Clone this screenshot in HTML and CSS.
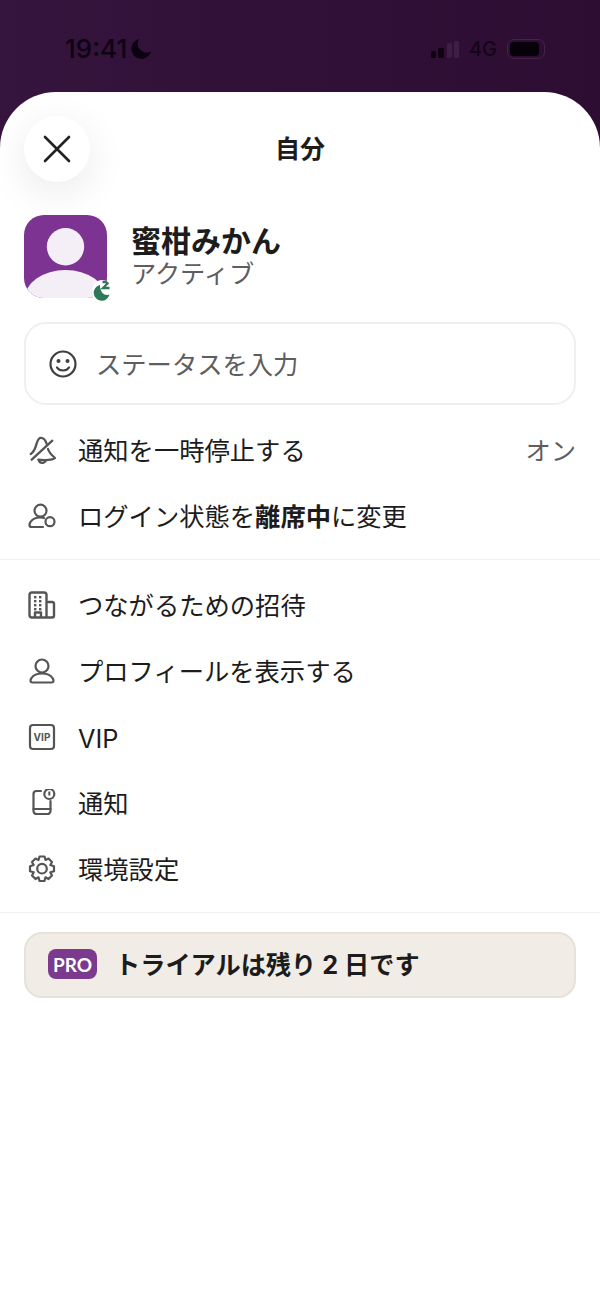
FILE: index.html
```html
<!DOCTYPE html>
<html lang="ja">
	<head>
		<meta charset="utf-8" />
		<title>自分</title>
		<link rel="stylesheet" href="styles.css">
	</head>
	<body>
		<div class="statusbar">
			<div class="clock">
				<span>19:41</span>
				<svg class="moon" width="21" height="21" viewBox="0 0 21 21"><path d="M8 1a10 10 0 1 0 12 12.500A9 9 0 0 1 8 1z" /></svg>
			</div>
			<div class="signal">
				<svg width="28" height="20" viewBox="0 0 28 20">
					<rect x="0" y="12" width="5" height="7" rx="1.500" fill="#0e0412" />
					<rect x="7" y="9" width="6" height="10" rx="1.500" fill="#0e0412" />
					<rect x="16" y="4" width="5" height="15" rx="1.500" fill="#3f1e46" />
					<rect x="23" y="2" width="5" height="17" rx="1.500" fill="#3f1e46" />
				</svg>
				<span class="net">4G</span>
				<div class="battery"><div class="battery-fill"></div></div>
			</div>
		</div>
		<div class="sheet">
			<div class="nav">
				<button class="close">
					<svg width="28" height="28" viewBox="0 0 28 28"><path d="M2 2l24 24M26 2L2 26" fill="none" stroke="#222" stroke-width="2.600" stroke-linecap="round" /></svg>
				</button>
				<div class="title">自分</div>
			</div>
			<div class="profile">
				<div class="avatar">
					<svg width="83" height="83" viewBox="0 0 83 83">
						<circle cx="41.500" cy="31.700" r="18.700" fill="#f4eff7" />
						<ellipse cx="41.500" cy="84" rx="41" ry="29" fill="#f4eff7" />
					</svg>
					<svg class="away" width="20" height="22" viewBox="0 0 20 22">
						<path d="M8 4.900a8 8 0 1 0 9.500 9.600c-4 1.500-9.500-1-9.500-9.600z" fill="#2d7a5b" />
						<path d="M10.500 2h6.500l-6 6h6.500" fill="none" stroke="#2d7a5b" stroke-width="2.300" />
					</svg>
				</div>
				<div class="who">
					<div class="name">蜜柑みかん</div>
					<div class="state">アクティブ</div>
				</div>
			</div>
			<div class="status-input">
				<svg class="icon" width="30" height="30" viewBox="0 0 30 30">
					<circle cx="15" cy="15" r="12.500" fill="none" stroke="#3f3f3f" stroke-width="2.200" />
					<circle cx="10.500" cy="12" r="2" fill="#3f3f3f" />
					<circle cx="19.500" cy="12" r="2" fill="#3f3f3f" />
					<path d="M9 18.500c2.500 4 9.500 4 12 0" fill="none" stroke="#3f3f3f" stroke-width="2.200" stroke-linecap="round" />
				</svg>
				<span class="label">ステータスを入力</span>
			</div>
			<div class="group">
				<div class="row">
					<svg class="icon" width="28" height="28" viewBox="0 0 28 28"><g fill="none" stroke="#555" stroke-width="2.300" stroke-linecap="round" stroke-linejoin="round">
						<path d="M3.700 23.700L24.300 4.700" />
						<path d="M2.700 18C6 16 7 13 8 9.700 9 6 10 2 12.500 1.800 15 1.600 17.500 4 18.700 8" />
						<path d="M20 13c1 3.500 3.500 6 7 9-2 2-10.500 2.500-16.700 1.700" />
						<path d="M11 25c1 2.500 5 2.500 6.500.2" />
					</g></svg>
					<span class="label">通知を一時停止する</span>
					<span class="label value">オン</span>
				</div>
				<div class="row">
					<svg class="icon" width="28" height="28" viewBox="0 0 28 28"><g fill="none" stroke="#555" stroke-width="2.200" stroke-linecap="round">
						<circle cx="12.500" cy="8.700" r="6" />
						<path d="M15 25H3.500C1 25 1 22 2.500 20c2-3 5-4.500 9.500-4.500 1.500 0 3 .2 4 .6" />
						<circle cx="22" cy="19.700" r="4.500" />
					</g></svg>
					<span class="label">ログイン状態を<b>離席中</b>に変更</span>
				</div>
			</div>
			<div class="group">
				<div class="row">
					<svg class="icon" width="28" height="28" viewBox="0 0 28 28"><g fill="none" stroke="#555" stroke-width="2.400" stroke-linejoin="round">
						<path d="M18.500 26.500H3.500A2.500 2.500 0 0 1 1.500 24v-20.500A2.500 2.500 0 0 1 4 1.500h12a2.500 2.500 0 0 1 2.500 2.500V26.500h5.500a2 2 0 0 0 2-2V13a2 2 0 0 0-2-2h-5.500" />
						<path d="M7 26.500v-5h6v5" />
					</g><g fill="#555">
						<rect x="6" y="5" width="2.400" height="2.400" /><rect x="11" y="5" width="2.400" height="2.400" />
						<rect x="6" y="9" width="2.400" height="2.400" /><rect x="11" y="9" width="2.400" height="2.400" />
						<rect x="6" y="13" width="2.400" height="2.400" /><rect x="11" y="13" width="2.400" height="2.400" />
						<rect x="6" y="17" width="2.400" height="2.400" /><rect x="11" y="17" width="2.400" height="2.400" />
					</g></svg>
					<span class="label">つながるための招待</span>
				</div>
				<div class="row">
					<svg class="icon" width="28" height="28" viewBox="0 0 28 28"><g fill="none" stroke="#555" stroke-width="2.200">
						<circle cx="14" cy="9" r="6.500" />
						<path d="M4.500 25.500C2 25.500 2 23 3.500 21c2-3 5.500-4.500 10.500-4.500s8.500 1.500 10.500 4.500c1.500 2 1.500 4.500-1 4.500z" />
					</g></svg>
					<span class="label">プロフィールを表示する</span>
				</div>
				<div class="row">
					<svg class="icon" width="28" height="28" viewBox="0 0 28 28">
						<rect x="2" y="2" width="24" height="24" rx="3" fill="none" stroke="#555" stroke-width="2.200" />
						<text x="14" y="17.500" text-anchor="middle" class="vip">VIP</text>
					</svg>
					<span class="label latin">VIP</span>
				</div>
				<div class="row">
					<svg class="icon" width="28" height="28" viewBox="0 0 28 28"><g fill="none" stroke="#555" stroke-width="2.200" stroke-linecap="round">
						<path d="M13 2H8.500a3 3 0 0 0-3 3v17a3 3 0 0 0 3 3h11a3 3 0 0 0 3-3V12" />
						<path d="M5.500 20h17" />
						<circle cx="21.300" cy="5" r="5" />
					</g><rect x="20.300" y="2.500" width="2" height="4" fill="#555" /></svg>
					<span class="label">通知</span>
				</div>
				<div class="row">
					<svg class="icon" width="28" height="28" viewBox="0 0 28 28"><g fill="none" stroke="#555" stroke-width="2.200" stroke-linejoin="round">
						<path d="M11.500 1.500h5l1 3.500 3-1.500 3.500 3.500-1.700 3 3.700 1.200v5l-3.700 1 1.700 3.300-3.500 3.500-3-1.700-1 3.700h-5l-1-3.700-3 1.700L4 20.500l1.700-3.300L2 16.200v-5l3.700-1.200L4 7l3.500-3.500 3 1.500z" />
						<circle cx="14" cy="13.700" r="4.800" />
					</g></svg>
					<span class="label">環境設定</span>
				</div>
			</div>
			<div class="promo">
				<span class="pro">PRO</span>
				<span class="label">トライアルは残り 2 日です</span>
			</div>
		</div>
	</body>
</html>
```

FILE: styles.css
```css
* {
	box-sizing: border-box;
}
html, body {
	margin: 0;
	height: 100%;
}
body {
	width: 600px;
	height: 1304px;
	overflow: hidden;
	display: flex;
	flex-direction: column;
	background: linear-gradient(90deg, #35143d, #2e0d33);
	font-family: "Inter", "Noto Sans CJK JP", sans-serif;
	color: #1d1c1d;
}
.statusbar {
	height: 92px;
	flex: none;
	display: flex;
	justify-content: space-between;
	align-items: flex-start;
	padding: 33px 55px 0 65px;
	color: #0d0312;
}
.clock {
	display: flex;
	align-items: center;
	gap: 4px;
	font-size: 26px;
	line-height: 31px;
	font-weight: 500;
}
.moon {
	fill: #0a020e;
}
.signal {
	display: flex;
	align-items: center;
	gap: 10px;
	height: 31px;
}
.net {
	font-size: 20px;
	font-weight: 500;
	color: #120618;
}
.battery {
	width: 38px;
	height: 20px;
	border: 1px solid #43234a;
	border-radius: 7px;
	padding: 2px;
}
.battery-fill {
	width: 29px;
	height: 14px;
	background: #07010a;
	border-radius: 4px;
}
.sheet {
	flex: 1;
	background: #fff;
	border-radius: 56px 56px 0 0;
	padding-top: 24px;
}
.nav {
	height: 66px;
	padding-left: 24px;
	position: relative;
	display: flex;
	align-items: center;
}
.close {
	width: 66px;
	height: 66px;
	border: none;
	border-radius: 50%;
	background: #fff;
	display: flex;
	align-items: center;
	justify-content: center;
	padding: 0;
	box-shadow: 0 10px 40px rgba(0, 0, 0, 0.09);
}
.title {
	position: absolute;
	left: 0;
	right: 0;
	text-align: center;
	font-size: 25px;
	font-weight: 700;
	padding-bottom: 4px;
}
.profile {
	margin-top: 33px;
	padding: 0 24px;
	display: flex;
	align-items: center;
	gap: 24px;
}
.avatar {
	width: 83px;
	height: 83px;
	border-radius: 20px;
	background: #7c3392;
	position: relative;
}
.avatar > svg:first-child {
	display: block;
	border-radius: 20px;
}
.away {
	position: absolute;
	right: -5px;
	bottom: -4px;
	background: #fff;
	border-radius: 50%;
}
.who {
	margin-top: -2px;
}
.name {
	font-size: 30px;
	line-height: 36px;
	font-weight: 700;
}
.state {
	font-size: 25.200px;
	line-height: 30px;
	color: #5e5d60;
}
.status-input {
	margin: 24px 24px 12px;
	height: 83px;
	border: 2px solid #efefef;
	border-radius: 22px;
	display: flex;
	align-items: center;
	gap: 18px;
	padding-left: 22px;
	font-size: 25.300px;
	color: #5e5d60;
}
.group {
	padding-bottom: 10px;
	border-bottom: 1px solid #f0f0f0;
	margin-bottom: 12px;
}
.row {
	height: 66px;
	padding: 0 24px 0 28px;
	display: flex;
	align-items: center;
	gap: 22px;
	font-size: 25.300px;
}
.row b {
	font-weight: 700;
}
.label {
	padding-bottom: 2px;
}
.row .label:nth-child(2) {
	flex: 1;
}
.row .latin {
	padding: 2px 0 0 0;
}
.value {
	color: #5e5d60;
}
.vip {
	font-family: "Inter", sans-serif;
	font-size: 10px;
	font-weight: 700;
	fill: #555;
}
.promo {
	margin: 19px 24px 0;
	height: 66px;
	background: #f1ede6;
	border: 2px solid #e6e2da;
	border-radius: 18px;
	display: flex;
	align-items: center;
	gap: 18px;
	padding: 0 0 2px 22px;
	font-size: 25.200px;
	font-weight: 700;
}
.pro {
	background: #7c3a8f;
	color: #fff;
	font-family: "Lato", sans-serif;
	font-size: 19px;
	font-weight: 700;
	border-radius: 8px;
	width: 49px;
	height: 30px;
	display: flex;
	align-items: center;
	justify-content: center;
}
```
